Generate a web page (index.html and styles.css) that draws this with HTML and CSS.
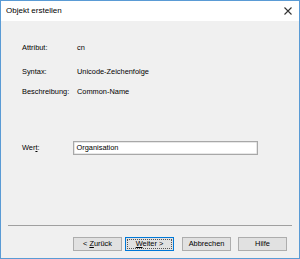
FILE: index.html
```html
<!DOCTYPE html>
<html lang="de">
<head>
<meta charset="utf-8">
<title>Objekt erstellen</title>
<link rel="stylesheet" href="styles.css">
</head>
<body>
<div class="window">
  <div class="titlebar">
    <span class="title">Objekt erstellen</span>
    <span class="close">
      <svg width="8" height="8" viewBox="0 0 8 8"><path d="M0.5 0.5 L7.5 7.5 M7.5 0.5 L0.5 7.5" stroke="#333" stroke-width="1.1" fill="none"/></svg>
    </span>
  </div>
  <div class="content">
    <div class="info">
      <div class="row r1"><span class="label">Attribut:</span><span class="value">cn</span></div>
      <div class="row r2"><span class="label">Syntax:</span><span class="value">Unicode-Zeichenfolge</span></div>
      <div class="row r3"><span class="label">Beschreibung:</span><span class="value">Common-Name</span></div>
    </div>
    <div class="wert">
      <span class="wlabel">Wer<u>t</u>:</span>
      <div class="input">Organisation</div>
    </div>
    <div class="sep"></div>
    <div class="buttons">
      <div class="btn"><span class="txt">&lt; <u>Z</u>urück</span></div>
      <div class="btn default"><span class="focus"><span class="txt"><u>W</u>eiter &gt;</span></span></div>
      <div class="btn cancel"><span class="txt">Abbrechen</span></div>
      <div class="btn help"><span class="txt">Hilfe</span></div>
    </div>
  </div>
</div>
</body>
</html>
```

FILE: styles.css
```css
html, body {
  margin: 0;
  padding: 0;
  background: #ffffff;
}
.window {
  width: 300px;
  height: 259px;
  box-sizing: border-box;
  border: 1px solid #5a9bd5;
  display: flex;
  flex-direction: column;
  font-family: "Liberation Sans", Arial, sans-serif;
  color: #000;
}
.titlebar {
  height: 20px;
  background: #fff;
  display: flex;
  align-items: center;
  justify-content: space-between;
  padding: 0 6px 0 5px;
}
.title {
  font-size: 8px;
  line-height: 20px;
}
.close {
  display: flex;
  margin-top: -1px;
  margin-right: 1px;
}
.content {
  flex: 1;
  background: #f0f0f0;
  display: flex;
  flex-direction: column;
  font-size: 7.4px;
  line-height: 10px;
}
.info {
  padding-left: 21px;
  padding-top: 22px;
}
.row {
  display: flex;
}
.r2 { margin-top: 14px; }
.r3 { margin-top: 10px; }
.label {
  width: 55px;
}
.wert {
  display: flex;
  align-items: center;
  margin-top: 44px;
  padding-left: 21px;
}
.wlabel {
  width: 50.5px;
}
.input {
  width: 185px;
  height: 14px;
  box-sizing: border-box;
  border: 1px solid #a8a8a8;
  box-shadow: inset 0 0 0 0.5px #d0d0d0;
  background: #fff;
  padding-left: 3px;
  line-height: 12px;
}
.sep {
  margin: 70px 7px 0 7px;
  height: 0;
  border-top: 1px solid #a0a0a0;
}
.buttons {
  display: flex;
  margin-top: 11px;
  padding-left: 72px;
}
.btn {
  width: 49px;
  height: 14px;
  box-sizing: border-box;
  border: 1px solid #adadad;
  background: #e1e1e1;
  display: flex;
  align-items: center;
  justify-content: center;
  line-height: 10px;
}
.txt {
  white-space: pre;
}
.btn.default {
  margin-left: 3px;
  border-color: #0078d7;
  padding: 1px;
}
.focus {
  width: 100%;
  height: 100%;
  box-sizing: border-box;
  border: 1px dotted #555;
  display: flex;
  align-items: center;
  justify-content: center;
}
.btn.cancel { margin-left: 8px; }
.btn.help { margin-left: 7px; }
```
